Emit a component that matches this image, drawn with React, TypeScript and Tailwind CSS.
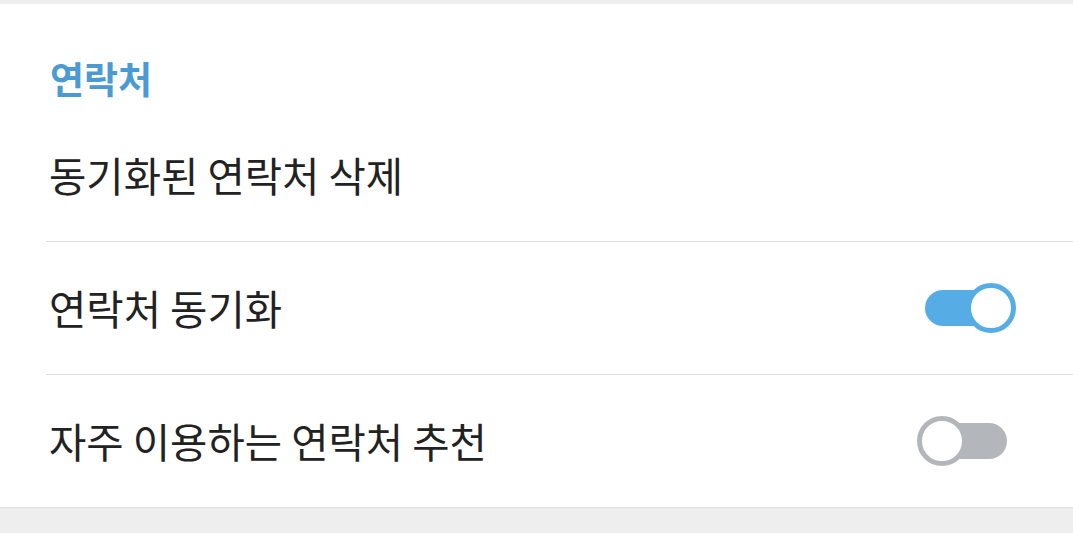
import React, { useState } from 'react';

function Toggle({ on, onChange }: { on: boolean; onChange: () => void }) {
  return (
    <button
      onClick={onChange}
      className="relative w-[82px] h-[36px] rounded-full shrink-0"
      style={{ backgroundColor: on ? '#56ade6' : '#b3b7bb' }}
    >
      <span
        className={`absolute top-1/2 -translate-y-1/2 w-[50px] h-[50px] rounded-full bg-white border-[5px] ${
          on ? 'left-[41px] border-[#56ade6]' : 'left-[-8px] border-[#b3b7bb]'
        }`}
      />
    </button>
  );
}

export default function App() {
  const [sync, setSync] = useState(true);
  const [recommend, setRecommend] = useState(false);

  return (
    <div
      className="w-[1073px] h-[533px] bg-[#eeeeee] pt-[4px] overflow-hidden"
      style={{ fontFamily: '"Noto Sans CJK KR", "Noto Sans", sans-serif' }}
    >
      <div className="bg-white h-[503px] pl-[46px] shadow-[0_1px_1px_rgba(0,0,0,0.06)]">
        {/* Section title */}
        <div className="h-[105px] flex items-center pl-[4px] pt-[44px]">
          <h2 className="text-[37px] font-bold text-[#4a9ad4] leading-none">연락처</h2>
        </div>

        {/* Rows */}
        <div className="h-[133px] flex items-center pl-[3px] border-b border-[#dedede]">
          <span className="text-[40.6px] text-[#222222] leading-none">동기화된 연락처 삭제</span>
        </div>
        <div className="h-[133px] flex items-center justify-between pl-[3px] pr-[66px] border-b border-[#dedede]">
          <span className="text-[40.6px] text-[#222222] leading-none">연락처 동기화</span>
          <Toggle on={sync} onChange={() => setSync(!sync)} />
        </div>
        <div className="h-[132px] flex items-center justify-between pl-[3px] pr-[66px]">
          <span className="text-[40.6px] text-[#222222] leading-none">자주 이용하는 연락처 추천</span>
          <Toggle on={recommend} onChange={() => setRecommend(!recommend)} />
        </div>
      </div>
    </div>
  );
}
